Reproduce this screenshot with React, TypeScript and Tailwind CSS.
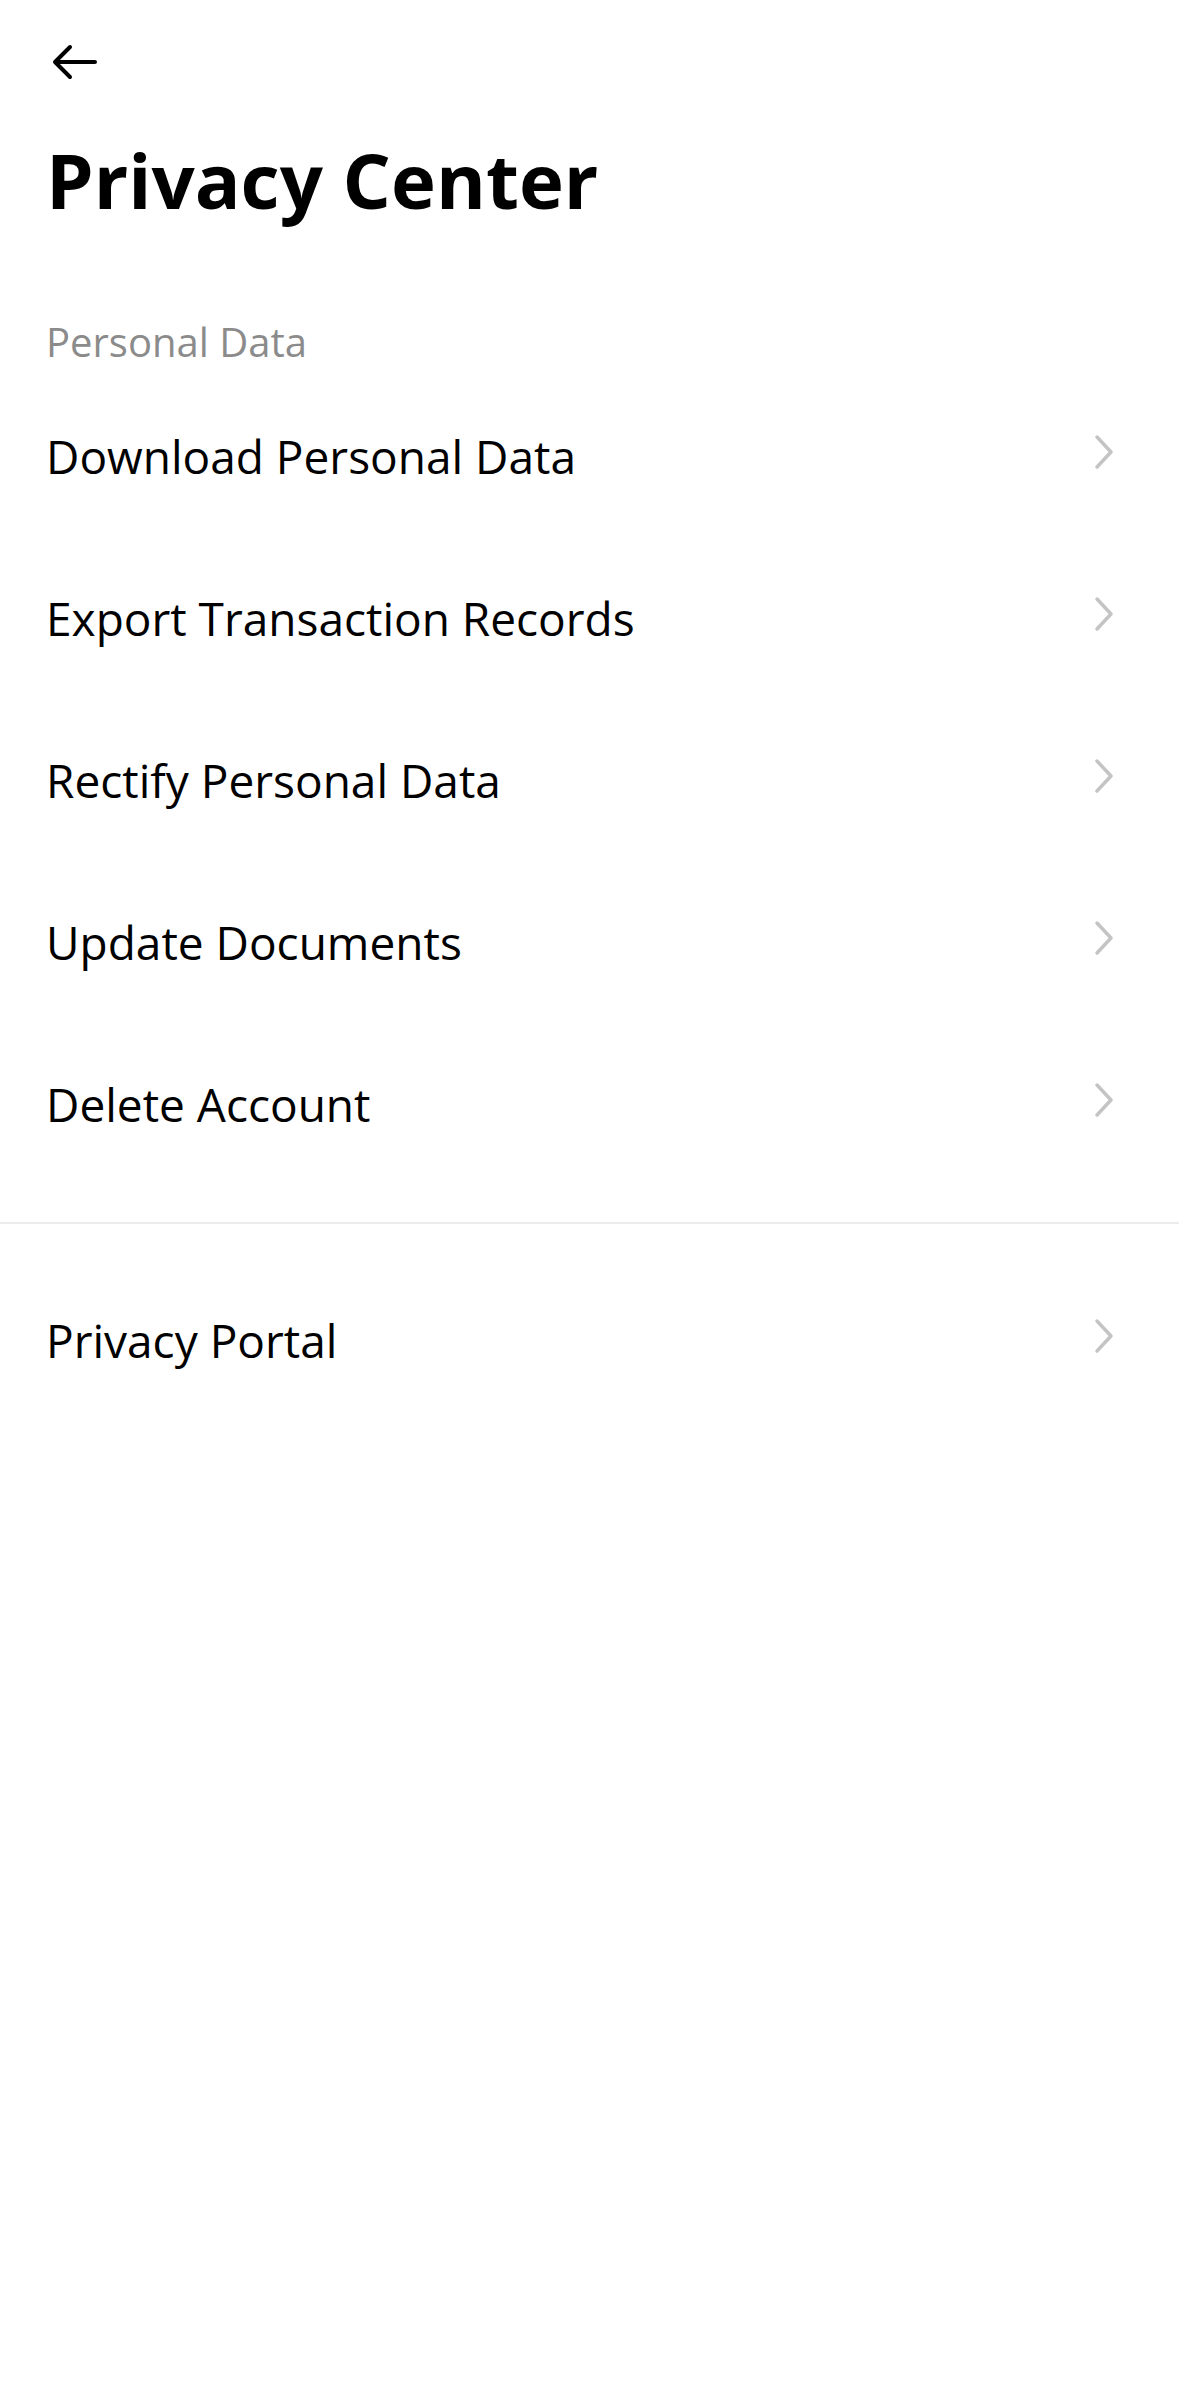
import React from "react";

const items = [
  "Download Personal Data",
  "Export Transaction Records",
  "Rectify Personal Data",
  "Update Documents",
  "Delete Account",
];

function Chevron() {
  return (
    <svg width="20" height="36" viewBox="0 0 20 36" fill="none" className="shrink-0 -mt-[8px]">
      <path d="M3 3 L17 18 L3 33" stroke="#c4c4c4" strokeWidth="3.5" strokeLinecap="round" strokeLinejoin="round" />
    </svg>
  );
}

function Row({ label }: { label: string }) {
  return (
    <div className="h-[162px] flex items-center justify-between pl-[46px] pr-[65px]">
      <span className="text-[46px] leading-none text-black">{label}</span>
      <Chevron />
    </div>
  );
}

export default function App() {
  return (
    <div className="w-[1179px] min-h-[2396px] bg-white" style={{ fontFamily: "'Open Sans', Lato, sans-serif" }}>
      <div className="pt-[44px] pl-[50px]">
        <svg width="50" height="36" viewBox="0 0 50 36" fill="none">
          <path d="M45 18 H5 M20 3 L5 18 L20 33" stroke="#000" strokeWidth="4" strokeLinecap="round" strokeLinejoin="round" />
        </svg>
      </div>
      <h1 className="pl-[46px] mt-[62px] text-[76px] leading-none font-bold text-black">Privacy Center</h1>
      <div className="pl-[46px] mt-[104px] text-[40px] leading-none text-[#8b8b8b]">Personal Data</div>
      <div className="mt-[13px]">
        {items.map((l) => (
          <Row key={l} label={l} />
        ))}
      </div>
      <div className="mt-[37px] h-[2px] bg-[#ececec]" />
      <div className="mt-[35px]">
        <Row label="Privacy Portal" />
      </div>
    </div>
  );
}
